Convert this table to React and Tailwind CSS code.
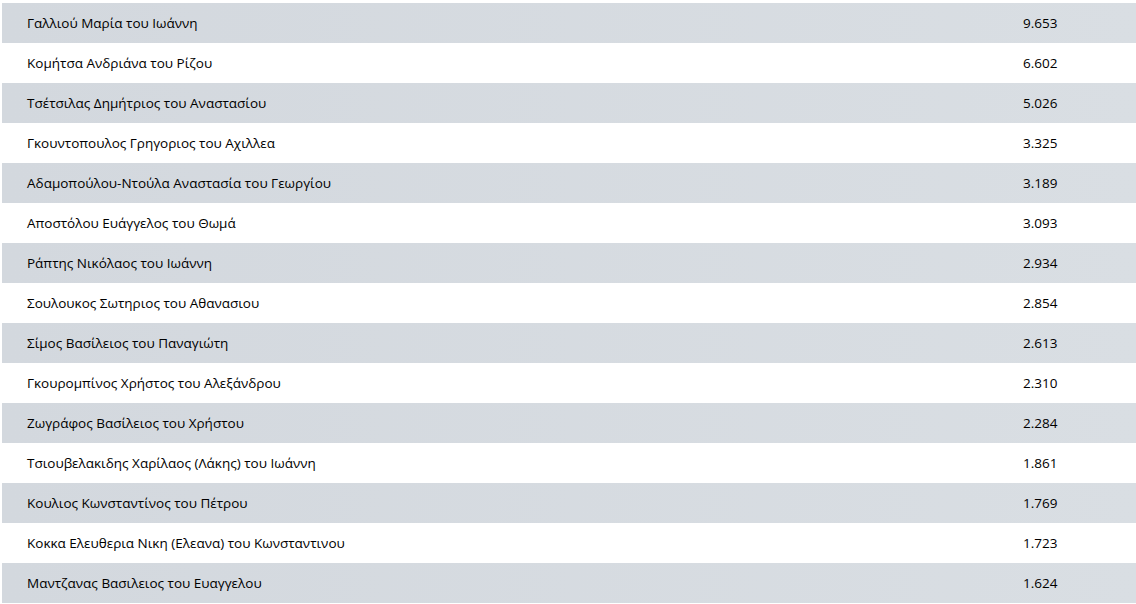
const rows = [
  ['Γαλλιού Μαρία του Ιωάννη', '9.653'],
  ['Κομήτσα Ανδριάνα του Ρίζου', '6.602'],
  ['Τσέτσιλας Δημήτριος του Αναστασίου', '5.026'],
  ['Γκουντοπουλος Γρηγοριος του Αχιλλεα', '3.325'],
  ['Αδαμοπούλου-Ντούλα Αναστασία του Γεωργίου', '3.189'],
  ['Αποστόλου Ευάγγελος του Θωμά', '3.093'],
  ['Ράπτης Νικόλαος του Ιωάννη', '2.934'],
  ['Σουλουκος Σωτηριος του Αθανασιου', '2.854'],
  ['Σίμος Βασίλειος του Παναγιώτη', '2.613'],
  ['Γκουρομπίνος Χρήστος του Αλεξάνδρου', '2.310'],
  ['Ζωγράφος Βασίλειος του Χρήστου', '2.284'],
  ['Τσιουβελακιδης Χαρίλαος (Λάκης) του Ιωάννη', '1.861'],
  ['Κουλιος Κωνσταντίνος του Πέτρου', '1.769'],
  ['Κοκκα Ελευθερια Νικη (Ελεανα) του Κωνσταντινου', '1.723'],
  ['Μαντζανας Βασιλειος του Ευαγγελου', '1.624'],
];

export default function App() {
  return (
    <div className="w-[1136px] h-[604px] bg-white overflow-hidden pt-[3px] pl-[2px] font-['Open_Sans',sans-serif] text-[13.5px] text-black">
      <div className="flex flex-col">
        {rows.map(([name, votes], i) => (
          <div
            key={name}
            className={`flex items-center h-[40px] pt-[1px] ${i % 2 === 0 ? 'bg-gradient-to-r from-[#d3d8de] to-[#d9dee3]' : 'bg-white'}`}
          >
            <div className="flex-1 pl-[25px]">{name}</div>
            <div className="w-[113px]">{votes}</div>
          </div>
        ))}
      </div>
    </div>
  );
}
